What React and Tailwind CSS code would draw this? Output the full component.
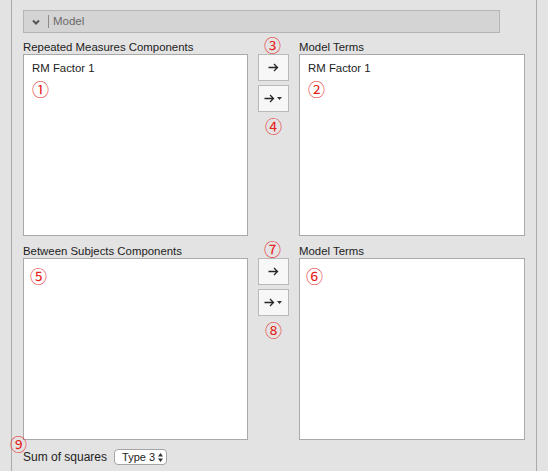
import React from 'react'

const font = { fontFamily: '"Liberation Sans", Arial, sans-serif' }

// red circled annotation number
function Mark({ n, className = '' }) {
  return (
    <span
      className={`block text-[17px] leading-[17px] text-[#e5231d] ${className}`}
      style={{ fontFamily: '"Noto Sans CJK JP", "DejaVu Sans", sans-serif' }}
    >
      {n}
    </span>
  )
}

function ArrowButton({ menu }) {
  return (
    <div className="flex h-[27px] w-[31px] items-center justify-center border border-[#b9b9b9] bg-[#f7f7f7]">
      <svg width="11" height="9" viewBox="0 0 11 9" className={menu ? '-ml-[2px]' : ''}>
        <path d="M0.5 4.5 H9.5 M6 1 L9.5 4.5 L6 8" fill="none" stroke="#262626" strokeWidth="1.3" />
      </svg>
      {menu && (
        <svg width="5" height="3" viewBox="0 0 5 3" className="ml-[2px]">
          <path d="M0 0 H5 L2.5 3 Z" fill="#333" />
        </svg>
      )}
    </div>
  )
}

function ListBox({ children }) {
  return (
    <div className="h-[182px] border border-[#a9a9a9] bg-white px-[8px] pt-[6px]">{children}</div>
  )
}

function Section({ leftLabel, leftItems, rightItems, marks }) {
  return (
    <div className="grid grid-cols-[225px_31px_226px] gap-x-[10px]">
      <div>
        <div className="h-[14px] leading-[14px]">{leftLabel}</div>
        <ListBox>{leftItems}</ListBox>
      </div>
      <div className="relative flex flex-col items-center pt-[14px]">
        <Mark n={marks[0]} className="absolute -top-[4px] left-[6px]" />
        <ArrowButton />
        <div className="mt-[4px]">
          <ArrowButton menu />
        </div>
        <Mark n={marks[1]} className="mt-[5px]" />
      </div>
      <div>
        <div className="h-[14px] leading-[14px]">Model Terms</div>
        <ListBox>{rightItems}</ListBox>
      </div>
    </div>
  )
}

export default function App() {
  return (
    <div className="flex h-[471px] w-[548px] bg-[#e3e3e3] text-[11.4px] text-[#222]" style={font}>
      <div className="w-[11px]" />
      <div className="relative w-[526px] border-x border-[#ababab] pl-[11px] pt-[10px]">
        {/* Header */}
        <div className="flex h-[23px] w-[477px] items-center border border-[#b5b5b5] bg-[#d4d4d4] text-[#6a6a6a]">
          <svg className="ml-[8px]" width="8" height="6" viewBox="0 0 8 6">
            <path d="M1 1.5 L4 4.5 L7 1.5" fill="none" stroke="#555" strokeWidth="2" />
          </svg>
          <div className="ml-[8px] h-[13px] w-px bg-[#8a8a8a]" />
          <span className="ml-[4px] text-[11.5px]">Model</span>
        </div>

        <div className="mt-[7px]">
          <Section
            leftLabel="Repeated Measures Components"
            leftItems={
              <>
                <div className="leading-[14px]">RM Factor 1</div>
                <Mark n="①" className="mt-[5px]" />
              </>
            }
            rightItems={
              <>
                <div className="leading-[14px]">RM Factor 1</div>
                <Mark n="②" className="mt-[5px]" />
              </>
            }
            marks={['③', '④']}
          />
        </div>

        <div className="mt-[8px]">
          <Section
            leftLabel="Between Subjects Components"
            leftItems={<Mark n="⑤" className="-ml-[2px] mt-[2px]" />}
            rightItems={<Mark n="⑥" className="-ml-[2px] mt-[2px]" />}
            marks={['⑦', '⑧']}
          />
        </div>

        <Mark n="⑨" className="absolute left-[-2px] top-[435px]" />

        <div className="mt-[8px] flex items-center">
          <span className="text-[12px]">Sum of squares</span>
          <div className="ml-[7px] flex h-[16px] w-[53px] items-center rounded-[4px] border border-[#a5a5a5] bg-white pl-[7px] text-[11px]">
            <span className="leading-none">Type 3</span>
            <svg width="5" height="9" viewBox="0 0 5 9" className="ml-[3px] shrink-0">
              <path d="M0 3.5 L2.5 0 L5 3.5 Z M0 5.5 H5 L2.5 9 Z" fill="#333" />
            </svg>
          </div>
        </div>
      </div>
    </div>
  )
}
